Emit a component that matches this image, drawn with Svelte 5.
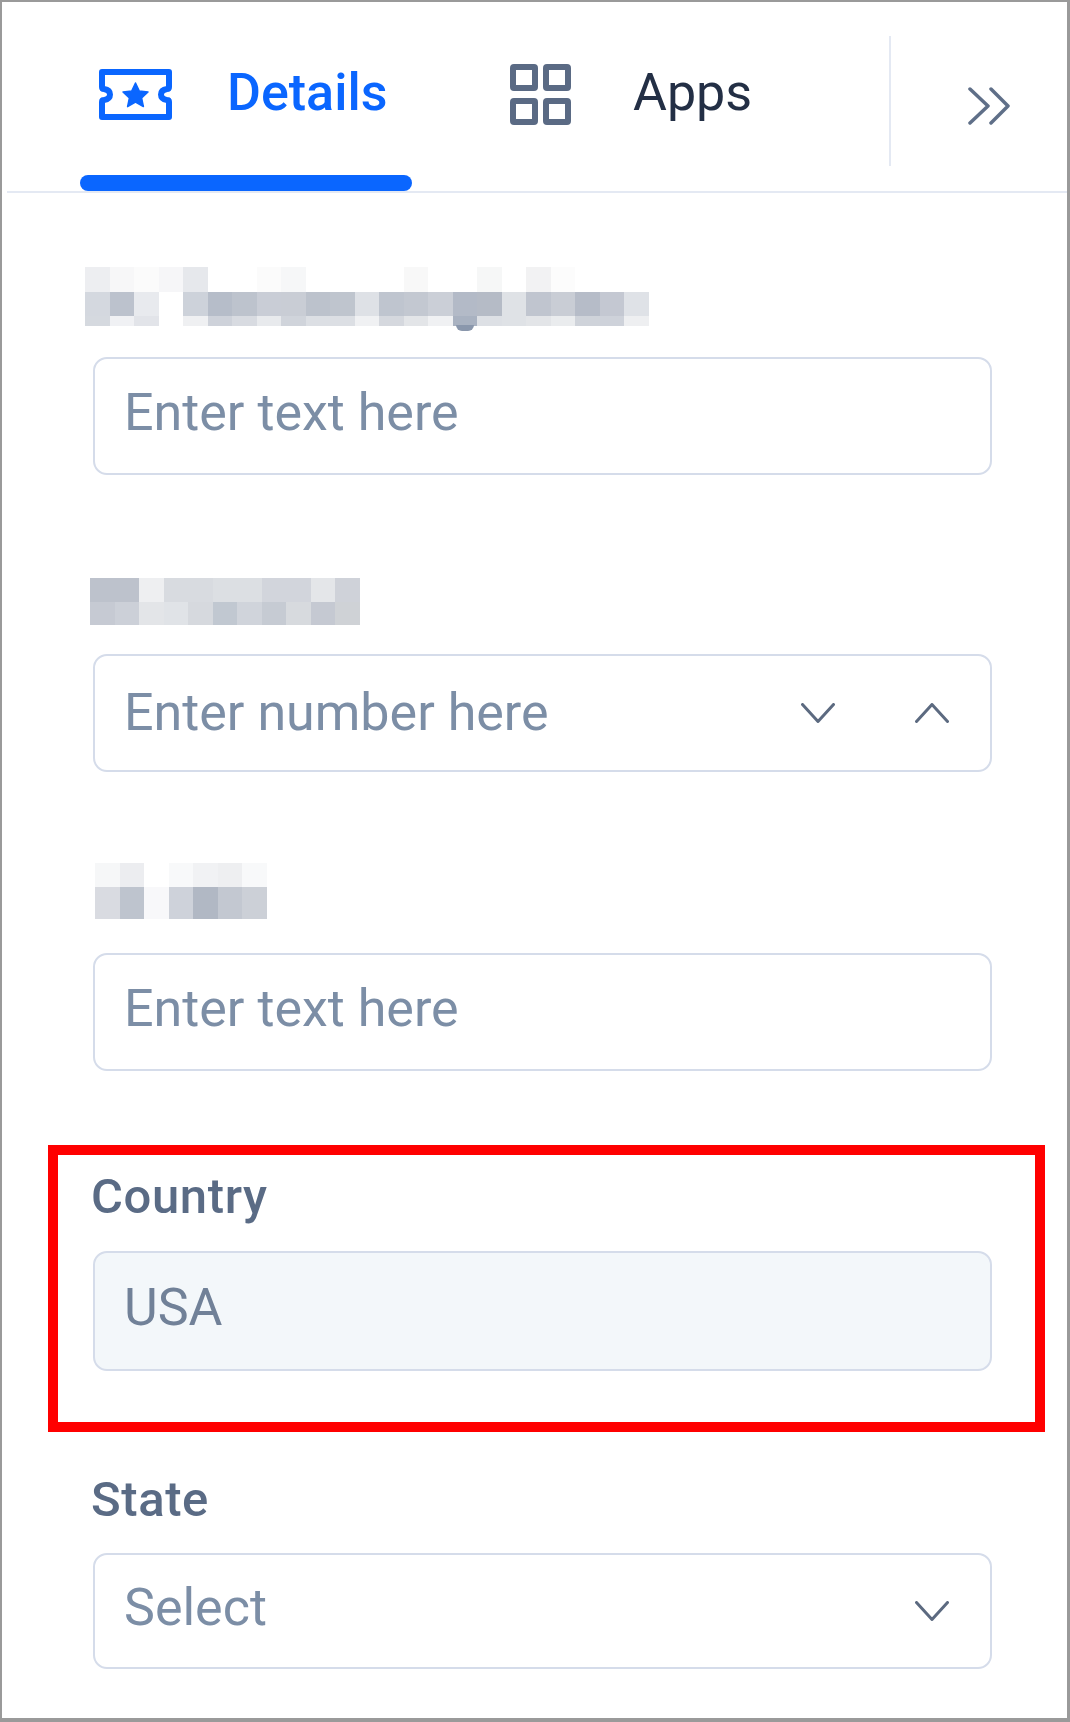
<script>
  const blurOne = [
    ['#edeef1','#f7f7f8','#fbfbfb','#f6f6f8','#e6e8ec','#fff','#fff','#fbfbfb','#f6f7f8','#fff','#fff','#fff','#fff','#f8f8f8','#fff','#fff','#f6f7f7','#fff','#f2f2f3','#fcfcfc','#fff','#fff','#fff'],
    ['#d4d8df','#bcc2cd','#e8eaee','#fff','#cdd2da','#b6bdc9','#bdc3cd','#c9cdd6','#c9cdd5','#bcc2cc','#bfc5ce','#dee1e6','#bfc5cf','#c3c8d1','#cbcfd7','#b3bac7','#b5bbc6','#dfe2e6','#c0c5cf','#c9cdd5','#b6bcc8','#c4c8d2','#dfe2e7'],
    ['#d5d9df','#f0f1f4','#e2e4e9','#fff','#eff0f2','#ced2da','#d8dbe1','#e8eaed','#d0d4db','#dcdfe4','#dcdfe4','#f0f1f3','#d5d8de','#e3e5e8','#f0f1f3','#a9b2c1','#dde0e5','#dfe2e6','#e3e5e8','#eaecee','#cfd3da','#ced2da','#eeeff1'],
  ];
  const blurTwo = [
    ['#bdc2cc','#bdc2cc','#eeeff1','#d8dbe0','#d8dbe0','#dcdfe3','#dcdfe3','#d2d5dc','#d2d5dc','#e4e6e9','#cfd2d9'],
    ['#c6cad3','#ccd0d8','#e3e5e8','#e0e3e7','#d6d9de','#c1c8d1','#d0d4db','#c6cbd3','#d7dade','#c5c9d2','#cfd2d6'],
  ];
  const blurThree = [
    ['#f6f7f8','#ecedf0','#fff','#f8f9fa','#f1f2f4','#eeeff1','#f8f9fa'],
    ['#d9dbe1','#bec4ce','#f8f8fa','#ced2da','#b1b8c4','#c3c8d1','#ccd0d7'],
  ];
</script>

{#snippet blur(rows, cls)}
  <div class="blur {cls}">
    {#each rows as row}
      <div class="blur-row">
        {#each row as c}
          <span class="cell" style="background:{c}"></span>
        {/each}
      </div>
    {/each}
  </div>
{/snippet}

{#snippet chevronDown()}
  <svg class="chev" viewBox="0 0 34 20" fill="none"><path d="M1.5 1.5 L17 18.5 L32.5 1.5" /></svg>
{/snippet}

<div class="panel">
  <div class="tabs">
    <div class="tab active">
      <svg class="ticket" viewBox="0 0 73 51" fill="none">
        <path class="outline" d="M3 3 H70 V18 Q70 20 68 20 Q62 21 62 25.5 Q62 30 68 31 Q70 31 70 33 V48 H3 V33 Q3 31 5 31 Q11 30 11 25.5 Q11 21 5 20 Q3 20 3 18 Z" />
        <path class="star" d="M36.5 14 L40.3 22 L49 23 L42.6 29 L44.4 37.6 L36.5 33.2 L28.6 37.6 L30.4 29 L24 23 L32.7 22 Z" />
      </svg>
      <span class="tab-label">Details</span>
    </div>
    <div class="tab">
      <svg class="grid-icon" viewBox="0 0 61 61" fill="none">
        <rect x="3" y="3" width="22" height="21" rx="1" />
        <rect x="36" y="3" width="22" height="21" rx="1" />
        <rect x="3" y="37" width="22" height="21" rx="1" />
        <rect x="36" y="37" width="22" height="21" rx="1" />
      </svg>
      <span class="tab-label">Apps</span>
    </div>
    <div class="collapse">
      <svg viewBox="0 0 42 38" fill="none"><path d="M2 2 L20 19 L2 36 M23 2 L40 19 L23 36" /></svg>
    </div>
  </div>

  <div class="fields">
    <div class="field first">
      <div class="blur-wrap">
        {@render blur(blurOne, 'b1')}
        <span class="tail"></span>
      </div>
      <div class="input"><span>Enter text here</span></div>
    </div>
    <div class="field second">
      {@render blur(blurTwo, 'b2')}
      <div class="input number">
        <span>Enter number here</span>
        <div class="steppers">
          {@render chevronDown()}
          <svg class="chev" viewBox="0 0 34 20" fill="none"><path d="M1.5 18.5 L17 1.5 L32.5 18.5" /></svg>
        </div>
      </div>
    </div>
    <div class="field third">
      {@render blur(blurThree, 'b3')}
      <div class="input"><span>Enter text here</span></div>
    </div>
    <div class="highlight">
      <div class="field">
        <div class="label">Country</div>
        <div class="input disabled"><span>USA</span></div>
      </div>
    </div>
    <div class="field state">
      <div class="label">State</div>
      <div class="input">
        <span>Select</span>
        {@render chevronDown()}
      </div>
    </div>
  </div>
</div>

<style>
  :global(body) { background: #fff; }

  .panel {
    box-sizing: border-box;
    width: 1070px;
    height: 1722px;
    border-style: solid;
    border-color: #9a9a9a;
    border-width: 2px 3px 4px 2px;
    background: #fff;
    font-family: Roboto, "Liberation Sans", sans-serif;
    overflow: hidden;
  }

  .tabs {
    display: flex;
    align-items: flex-start;
    height: 189px;
    margin-left: 5px;
    border-bottom: 2px solid #e4e9f3;
    box-sizing: content-box;
  }

  .tab {
    display: flex;
    align-items: center;
    height: 189px;
    box-sizing: border-box;
  }

  .tab:first-child {
    width: 332px;
    margin-left: 73px;
    padding: 12px 0 0 19px;
    border-bottom: 16px solid transparent;
    position: relative;
    gap: 55px;
  }

  .tab.active::after {
    content: '';
    position: absolute;
    left: 0;
    right: 0;
    bottom: -16px;
    height: 16px;
    border-radius: 8px;
    background: #0a66ff;
  }

  .tab:nth-child(2) {
    margin-left: 98px;
    gap: 62px;
    padding-bottom: 4px;
  }

  .tab-label {
    font-size: 52px;
    font-weight: 400;
    color: #232f45;
    line-height: 60px;
    margin-bottom: 4px;
  }

  .active .tab-label {
    color: #0a66ff;
    font-weight: 500;
  }

  .ticket { width: 73px; height: 51px; flex: none; }
  .ticket .outline { stroke: #0a66ff; stroke-width: 6; stroke-linejoin: round; }
  .ticket .star { fill: #0a66ff; stroke: #0a66ff; stroke-width: 1.5; stroke-linejoin: round; }

  .grid-icon { width: 61px; height: 61px; flex: none; }
  .grid-icon rect { stroke: #5a6a84; stroke-width: 6; }

  .collapse {
    margin-left: auto;
    width: 178px;
    height: 130px;
    margin-top: 34px;
    border-left: 2px solid #e4e9f3;
    box-sizing: border-box;
    padding: 51px 0 0 77px;
  }

  .collapse svg {
    display: block;
    width: 42px;
    height: 38px;
  }

  .collapse path {
    stroke: #5f6f88;
    stroke-width: 3.5;
    stroke-linecap: round;
    stroke-linejoin: round;
  }

  .fields {
    padding-left: 91px;
    padding-right: 75px;
  }

  .field { display: block; }
  .field.first { padding-top: 74px; }
  .field.second { padding-top: 103px; }
  .field.third { padding-top: 91px; }
  .field.state { padding-top: 40px; }

  .blur { display: flex; flex-direction: column; }
  .blur-row { display: flex; height: 24.5px; flex: none; }
  .cell { width: 24.5px; flex: none; }
  .blur-wrap { position: relative; }
  .b1 { margin-left: -8px; height: 58px; margin-bottom: 32px; }
  .b1 .blur-row:last-child { height: 10px; }
  .tail {
    position: absolute;
    left: 363px;
    top: 58px;
    width: 18px;
    height: 6px;
    border-radius: 0 0 9px 9px;
    background: #8a97ac;
  }
  .b2 { margin-left: -3px; height: 47px; margin-bottom: 29px; }
  .b2 .blur-row { height: 23.5px; }
  .b3 { margin-left: 2px; height: 56px; margin-bottom: 34px; }
  .b3 .blur-row { height: 24px; }
  .b3 .blur-row:last-child { height: 32px; }

  .input {
    box-sizing: border-box;
    height: 118px;
    border: 2px solid #d5dcea;
    border-radius: 14px;
    background: #fff;
    display: flex;
    align-items: center;
    justify-content: space-between;
    padding: 0 41px 0 29px;
    font-size: 52px;
    color: #7c8ea6;
  }

  .input span { position: relative; top: -4px; }
  .input.number span { top: -1px; }

  .input.disabled {
    height: 120px;
    background: #f3f7fa;
    color: #718198;
  }

  .label {
    font-size: 49px;
    font-weight: 500;
    color: #5a6b85;
    line-height: 56px;
    letter-spacing: 0.6px;
    margin-left: -2px;
    margin-bottom: 26px;
  }

  .state .label { margin-bottom: 25px; }

  .highlight {
    box-sizing: border-box;
    border: 10px solid #ff0000;
    height: 287px;
    margin: 74px -53px 0 -45px;
    padding: 14px 43px 0 35px;
  }

  .state .input { height: 116px; }

  .steppers {
    display: flex;
    gap: 80px;
  }

  .chev {
    display: block;
    width: 34px;
    height: 20px;
    flex: none;
  }

  .chev path {
    stroke: #5c6a80;
    stroke-width: 3;
    stroke-linecap: round;
    stroke-linejoin: round;
  }
</style>
